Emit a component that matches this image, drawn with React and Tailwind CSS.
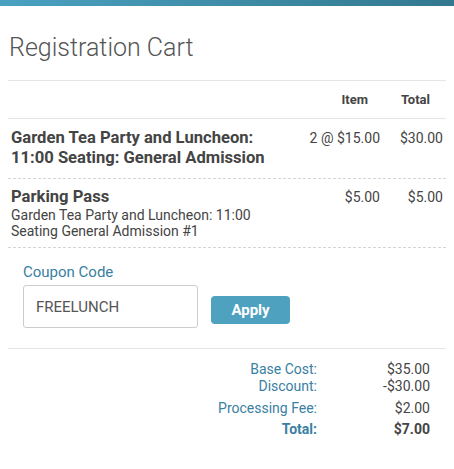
export default function App() {
  const font = { fontFamily: "Roboto, 'Liberation Sans', sans-serif" };
  return (
    <div className="bg-white min-h-screen text-[#444]" style={font}>
      <div className="h-[6px] bg-gradient-to-r from-[#4aa1c1] to-[#33788f]" />
      <div className="px-2">
        <h1 className="text-[25px] font-light text-[#555] pt-[26px] pb-[16px] pl-[1px] leading-[32px]">
          Registration Cart
        </h1>
        <div className="border-t border-[#e5e5e5]" />
        <div className="flex text-[13px] font-bold text-[#444] h-[37px] items-center">
          <div className="flex-1" />
          <div className="w-[100px] text-right pr-[18px]">Item</div>
          <div className="w-[60px] text-right pr-[16px]">Total</div>
        </div>
        <div className="border-t border-[#e5e5e5]" />

        <div className="flex pt-[9px] pb-[10px] border-b border-dashed border-[#d5d5d5]">
          <div className="flex-1 pl-[3px] text-[16.6px] font-bold text-[#444] leading-[20px]">
            Garden Tea Party and Luncheon:
            <br />
            11:00 Seating: General Admission
          </div>
          <div className="w-[100px] text-right pr-[6px] text-[14px] leading-[20px]">2 @ $15.00</div>
          <div className="w-[60px] text-right pr-[3px] text-[14px] leading-[20px]">$30.00</div>
        </div>

        <div className="flex pt-[8px] pb-[8px] border-b border-dashed border-[#d5d5d5]">
          <div className="flex-1 pl-[3px]">
            <div className="text-[16.6px] font-bold leading-[20px]">Parking Pass</div>
            <div className="text-[14px] leading-[16px] text-[#444]">
              Garden Tea Party and Luncheon: 11:00
              <br />
              Seating General Admission #1
            </div>
          </div>
          <div className="w-[100px] text-right pr-[6px] text-[14px] leading-[20px]">$5.00</div>
          <div className="w-[60px] text-right pr-[3px] text-[14px] leading-[20px]">$5.00</div>
        </div>

        <div className="pl-[15px] pt-[15px] pb-[20px] border-b border-[#e5e5e5]">
          <div className="text-[15px] text-[#3a80a2] leading-[18px]">Coupon Code</div>
          <div className="flex items-start gap-[13px] mt-[4px]">
            <input
              defaultValue="FREELUNCH"
              className="w-[175px] h-[43px] border border-[#ccc] rounded-[3px] px-[12px] text-[15px] text-[#555] outline-none"
              style={font}
            />
            <button
              className="w-[79px] h-[28px] mt-[11px] rounded-[4px] bg-[#4ea1bf] text-white text-[15px] font-bold"
              style={font}
            >
              Apply
            </button>
          </div>
        </div>

        <div className="flex justify-end pt-[12px] pr-[16px] text-[14px] leading-[17px]">
          <div className="text-right text-[#3a80a2]">
            <div>Base Cost:</div>
            <div>Discount:</div>
            <div className="mt-[5px]">Processing Fee:</div>
            <div className="mt-[4px] font-bold">Total:</div>
          </div>
          <div className="w-[113px] text-right text-[#444]">
            <div>$35.00</div>
            <div>-$30.00</div>
            <div className="mt-[5px]">$2.00</div>
            <div className="mt-[4px] font-bold">$7.00</div>
          </div>
        </div>
      </div>
    </div>
  );
}
